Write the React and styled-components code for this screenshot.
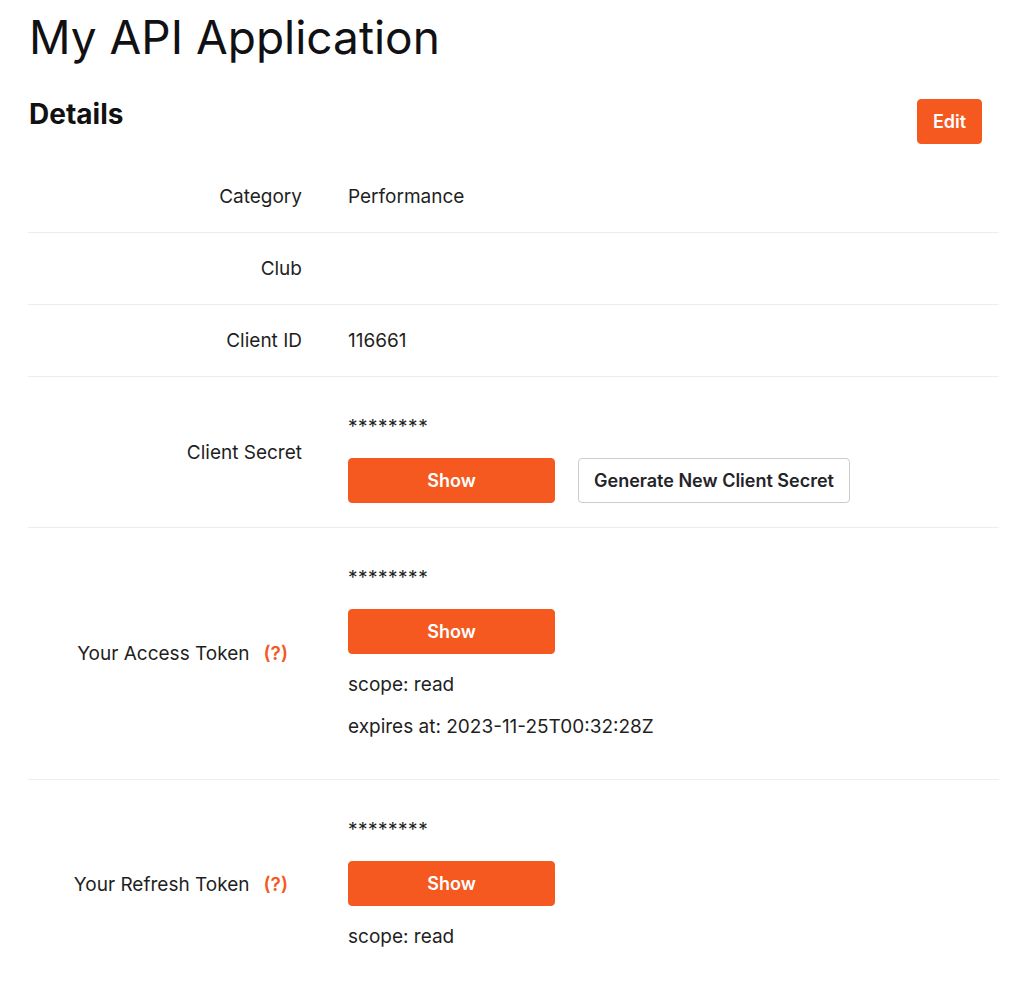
import React from "react";
import styled, { createGlobalStyle } from "styled-components";

const GlobalStyle = createGlobalStyle`
  html, body { margin: 0; padding: 0; background: #ffffff; }
  body {
    font-family: Inter, "Noto Sans", "Liberation Sans", sans-serif;
    color: #1f1f23;
    -webkit-font-smoothing: antialiased;
  }
`;

const ORANGE = "#f5591f";

const Page = styled.main`
  padding: 0 10px 0 28px;
`;

const Title = styled.h1`
  margin: 10px 0 0 1px;
  font-size: 46px;
  line-height: 55px;
  font-weight: 400;
  color: #111114;
  letter-spacing: 0;
`;

const SectionHeader = styled.div`
  display: flex;
  justify-content: space-between;
  align-items: flex-start;
  margin-top: 32px;
  padding-right: 17px;
`;

const SectionTitle = styled.h2`
  margin: 0 0 0 1px;
  font-size: 28px;
  line-height: 34px;
  font-weight: 700;
  color: #111114;
`;

const Button = styled.button`
  height: 45px;
  border-radius: 4px;
  font-family: inherit;
  font-size: 18px;
  font-weight: 600;
  line-height: 1;
  cursor: pointer;
  padding: 0 15px;
  border: 1px solid ${(p) => (p.$variant === "secondary" ? "#cbcbcb" : ORANGE)};
  background: ${(p) => (p.$variant === "secondary" ? "#ffffff" : ORANGE)};
  color: ${(p) => (p.$variant === "secondary" ? "#242428" : "#ffffff")};
  width: ${(p) => (p.$wide ? "207px" : "auto")};
`;

const EditButton = styled(Button)`
  margin-top: 2px;
  width: 65px;
  padding: 0;
`;

const Table = styled.div`
  margin-top: 17px;
`;

const Row = styled.div`
  display: grid;
  grid-template-columns: 274px 1fr;
  column-gap: 46px;
  align-items: center;
  padding: 24px 0 23px;
  border-bottom: ${(p) => (p.$last ? "none" : "1px solid #ededea")};
  font-size: 19px;
  line-height: 24px;
`;

const Label = styled.div`
  text-align: right;
  color: #1f1f23;
`;

const Help = styled.a`
  color: ${ORANGE};
  font-weight: 600;
  margin-left: 14px;
  margin-right: 14px;
  text-decoration: none;
`;

const Value = styled.div`
  display: flex;
  flex-direction: column;
  align-items: flex-start;
  padding-bottom: ${(p) => (p.$trail ? "17px" : "0")};
`;

const Masked = styled.div`
  margin: 14px 0 19px;
  letter-spacing: 0.5px;
`;

const Actions = styled.div`
  display: flex;
  gap: 23px;
  margin-bottom: 1px;
`;

const Meta = styled.div`
  margin-top: 19px;
  & + & {
    margin-top: 18px;
  }
`;

export default function App() {
  return (
    <>
      <GlobalStyle />
      <Page>
        <Title>My API Application</Title>
        <SectionHeader>
          <SectionTitle>Details</SectionTitle>
          <EditButton>Edit</EditButton>
        </SectionHeader>
        <Table>
          <Row>
            <Label>Category</Label>
            <Value>Performance</Value>
          </Row>
          <Row>
            <Label>Club</Label>
            <Value>&nbsp;</Value>
          </Row>
          <Row>
            <Label>Client ID</Label>
            <Value>116661</Value>
          </Row>
          <Row>
            <Label>Client Secret</Label>
            <Value>
              <Masked>********</Masked>
              <Actions>
                <Button $wide>Show</Button>
                <Button $variant="secondary">Generate New Client Secret</Button>
              </Actions>
            </Value>
          </Row>
          <Row>
            <Label>
              Your Access Token<Help href="#">(?)</Help>
            </Label>
            <Value $trail>
              <Masked>********</Masked>
              <Button $wide>Show</Button>
              <Meta>scope: read</Meta>
              <Meta>expires at: 2023-11-25T00:32:28Z</Meta>
            </Value>
          </Row>
          <Row $last>
            <Label>
              Your Refresh Token<Help href="#">(?)</Help>
            </Label>
            <Value $trail>
              <Masked>********</Masked>
              <Button $wide>Show</Button>
              <Meta>scope: read</Meta>
            </Value>
          </Row>
        </Table>
      </Page>
    </>
  );
}
